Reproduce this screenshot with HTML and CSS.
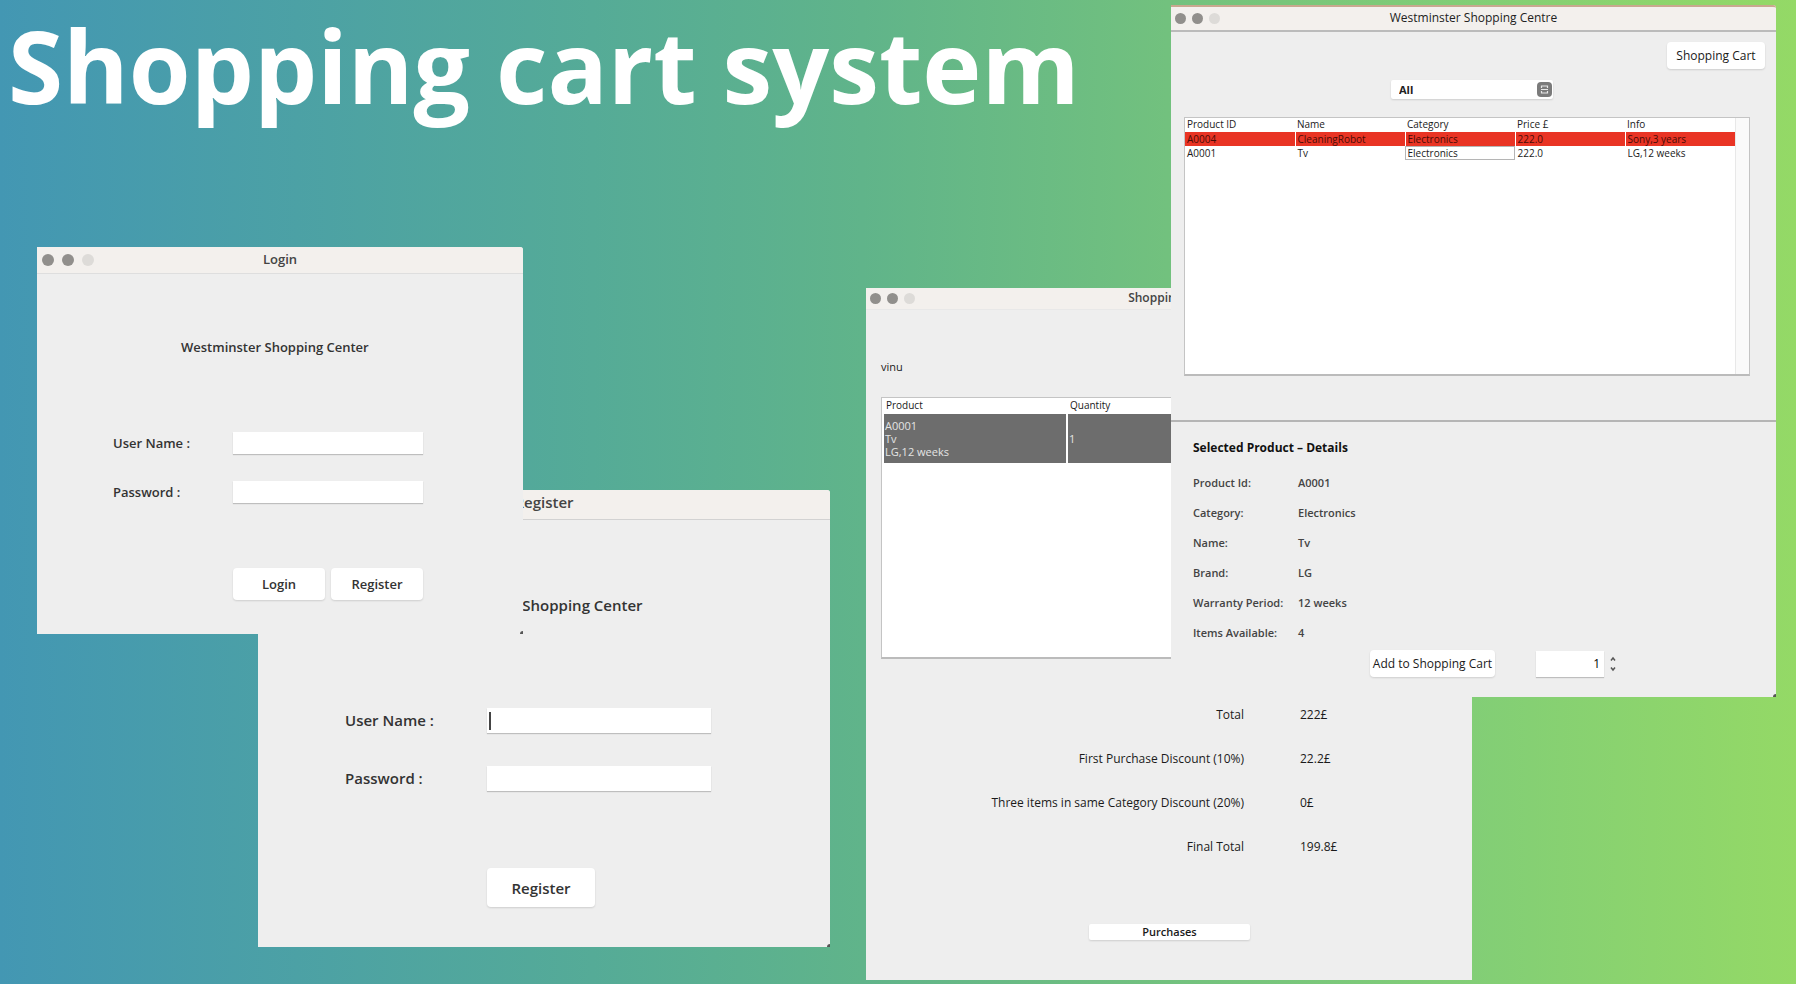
FILE: index.html
```html
<!DOCTYPE html>
<html lang="en">
<head>
<meta charset="utf-8">
<title>Shopping cart system</title>
<link rel="stylesheet" href="styles.css">
</head>
<body>
<main class="canvas">
  <h1 class="headline">Shopping cart system</h1>

  <section class="window register">
    <header class="titlebar"><h2 class="window-title">Register</h2></header>
    <form class="form">
      <p class="form-heading">Westminster Shopping Center</p>
      <label for="reg-user">User Name :</label>
      <span class="field"><input id="reg-user" type="text"><i class="caret"></i></span>
      <label for="reg-pass">Password :</label>
      <span class="field"><input id="reg-pass" type="password"></span>
      <div class="actions"><button type="button">Register</button></div>
    </form>
  </section>

  <section class="window login">
    <header class="titlebar">
      <span class="lights"><i></i><i></i><i></i></span>
      <h2 class="window-title">Login</h2>
    </header>
    <form class="form">
      <p class="form-heading">Westminster Shopping Center</p>
      <label for="log-user">User Name :</label>
      <span class="field"><input id="log-user" type="text"></span>
      <label for="log-pass">Password :</label>
      <span class="field"><input id="log-pass" type="password"></span>
      <div class="actions"><button type="button">Login</button><button type="button">Register</button></div>
    </form>
  </section>

  <section class="window cart">
    <header class="titlebar">
      <span class="lights"><i></i><i></i><i></i></span>
      <h2 class="window-title">Shopping Cart</h2>
    </header>
    <p class="user">vinu</p>
    <div class="cart-pane">
      <table class="cart-table">
        <thead><tr><th>Product</th><th>Quantity</th></tr></thead>
        <tbody><tr><td>A0001<br>Tv<br>LG,12 weeks</td><td>1</td></tr></tbody>
      </table>
    </div>
    <dl class="totals">
      <dt>Total</dt><dd>222£</dd>
      <dt>First Purchase Discount (10%)</dt><dd>22.2£</dd>
      <dt>Three items in same Category Discount (20%)</dt><dd>0£</dd>
      <dt>Final Total</dt><dd>199.8£</dd>
    </dl>
    <button class="purchase" type="button">Purchases</button>
  </section>

  <section class="window centre">
    <header class="titlebar">
      <span class="lights"><i></i><i></i><i></i></span>
      <h2 class="window-title">Westminster Shopping Centre</h2>
    </header>
    <div class="toolbar"><button type="button">Shopping Cart</button></div>
    <div class="filter">
      <select aria-label="Category"><option>All</option></select>
      <svg class="chevrons" viewBox="0 0 15 15" aria-hidden="true">
        <rect width="15" height="15" rx="4" fill="#7b7b7b"/>
        <path d="M4.500 6V4H10.500V6M4.500 9V11H10.500V9M4 7.500H11" fill="none" stroke="#e8e8e8" stroke-width="1.200"/>
      </svg>
    </div>
    <div class="product-pane">
      <table class="products">
        <thead><tr><th>Product ID</th><th>Name</th><th>Category</th><th>Price £</th><th>Info</th></tr></thead>
        <tbody>
          <tr class="low"><td>A0004</td><td>CleaningRobot</td><td>Electronics</td><td>222.0</td><td>Sony,3 years</td></tr>
          <tr><td>A0001</td><td>Tv</td><td class="focus">Electronics</td><td>222.0</td><td>LG,12 weeks</td></tr>
        </tbody>
      </table>
      <div class="track"></div>
    </div>
    <div class="details">
      <h3>Selected Product – Details</h3>
      <dl>
        <dt>Product Id:</dt><dd>A0001</dd>
        <dt>Category:</dt><dd>Electronics</dd>
        <dt>Name:</dt><dd>Tv</dd>
        <dt>Brand:</dt><dd>LG</dd>
        <dt>Warranty Period:</dt><dd>12 weeks</dd>
        <dt>Items Available:</dt><dd>4</dd>
      </dl>
      <div class="add">
        <button type="button">Add to Shopping Cart</button>
        <input type="text" inputmode="numeric" value="1" aria-label="Quantity">
        <span class="stepper">
          <button type="button" aria-label="Increase"><svg viewBox="0 0 8 6"><path d="M2 4.500L4 2L6 4.500" fill="none" stroke="#555" stroke-width="1.500"/></svg></button>
          <button type="button" aria-label="Decrease"><svg viewBox="0 0 8 6"><path d="M2 1.500L4 4L6 1.500" fill="none" stroke="#555" stroke-width="1.500"/></svg></button>
        </span>
      </div>
    </div>
  </section>
</main>
</body>
</html>
```

FILE: styles.css
```css
* { box-sizing: border-box; }
body { margin: 0; }
h1, h2, h3, p, dl, dd { margin: 0; }

.canvas {
  position: relative;
  min-height: 100vh;
  overflow: hidden;
  background: linear-gradient(90deg, #4397b3 0%, #55ab97 33%, #60b48a 48%, #72c17e 65%, #82ce76 82%, #94d966 100%);
  font-family: "Open Sans", "Noto Sans", sans-serif;
  color: #1a1a1a;
}
.headline {
  padding: 0 8px;
  font-size: 100px;
  line-height: 130px;
  font-weight: 700;
  color: #fff;
  white-space: nowrap;
}

/* Windows on the desktop */
.window { position: absolute; background: #eee; border-top-right-radius: 3px; white-space: nowrap; }
.window::after {
  content: "";
  position: absolute;
  right: 0;
  bottom: 0;
  width: 3px;
  height: 3px;
  border-top-left-radius: 3px;
  background: #555;
}
.titlebar {
  display: grid;
  grid-template-columns: 1fr auto 1fr;
  align-items: center;
  background: #f3f0ed;
  border-bottom: 1px solid #dedede;
  border-top-right-radius: 3px;
}
.window-title {
  grid-column: 2;
  padding-bottom: 2px;
  font-size: inherit;
  line-height: 18px;
  font-weight: 600;
  color: #444;
}
.lights { display: flex; gap: 6px; padding-left: 4px; }
.lights i { width: 11px; height: 11px; border-radius: 50%; background: #918f8c; }
.lights i:last-child { background: #dddbd8; }

button {
  padding: 0;
  border: 0;
  border-radius: 4px;
  background: #fff;
  box-shadow: 0 1px 2px #0002;
  font: inherit;
  color: #1a1a1a;
}
input {
  display: block;
  width: 100%;
  border: 0;
  padding: 0 4px;
  background: #fff;
  box-shadow: 0 1px 1px #0003;
  font: inherit;
}

/* Login and register forms */
.form { display: grid; align-items: end; font-weight: 600; color: #333; }
.form button { color: #333; }
.form-heading { grid-column: 1 / -1; }
.form label { grid-column: 1; }
.field { position: relative; }
.actions { grid-column: 2; display: flex; gap: 6px; }
.caret { position: absolute; left: 2px; top: 4px; bottom: 3px; width: 2px; background: #444; }

.login { left: 37px; top: 247px; width: 486px; font-size: 13px; }
.login .titlebar { height: 27px; }
.login .lights { gap: 8px; padding-left: 5px; }
.login .lights i { width: 12px; height: 12px; }
.login .form {
  grid-template-columns: 120px 190px;
  grid-template-rows: 20px 98px 49px 97px;
  padding: 62px 0 34px 76px;
}
.login .form-heading { padding-left: 68px; }
.login .field input { height: 22px; }
.login .actions button { flex: 1; height: 32px; }
.login label { line-height: 22px; }

.register { left: 258px; top: 490px; width: 572px; font-size: 15px; }
.register .titlebar { height: 30px; border-color: #d2d2d2; }
.register .window-title { padding-bottom: 5px; }
.register .form {
  grid-template-columns: 142px 224px;
  grid-template-rows: 22px 118px 58px 116px;
  padding: 73px 0 40px 87px;
}
.register .form-heading { padding-left: 81px; }
.register .field input { height: 25px; }
.register label { line-height: 25px; }
.register .actions button { width: 108px; height: 39px; }

/* Cart window */
.cart { left: 866px; top: 288px; width: 606px; padding-bottom: 40px; font-size: 11px; }
.cart::after { display: none; }
.cart .titlebar { height: 22px; border-color: #e8e8e8; font-size: 12px; }
.user { padding: 49px 15px 22px; line-height: 16px; }
.cart-pane { height: 262px; margin: 0 15px; border: 1px solid #c4c4c4; border-bottom: 2px solid #bbb; background: #fff; }
.cart-table { width: 100%; border-collapse: collapse; table-layout: fixed; line-height: 13px; font-size: 10px; }
.cart-table th { padding: 1px 3px 2px; text-align: left; font-weight: 400; }
.cart-table th:first-child { width: 184px; }
.cart-table td {
  padding: 5px 1px;
  border: 2px solid #fff;
  border-width: 0 2px;
  background: #6d6d6d;
  color: #e4e4e4;
  font-size: 11px;
}
.totals {
  display: grid;
  grid-template-columns: 378px 1fr;
  column-gap: 56px;
  row-gap: 28px;
  padding: 48px 0 69px;
  font-size: 12px;
  line-height: 16px;
}
.totals dt { text-align: right; }
.purchase {
  display: block;
  width: 161px;
  height: 16px;
  margin-left: 223px;
  border-radius: 2px;
  line-height: 16px;
  font-weight: 600;
}

/* Product window */
.centre { left: 1171px; top: 5px; width: 605px; padding-bottom: 20px; font-size: 12px; }
.centre .titlebar { height: 27px; border-top: 2px solid #c9a88f; border-bottom: 2px solid #bbb; }
.centre .window-title { font-weight: 400; color: #222; }
.toolbar { display: flex; justify-content: flex-end; padding: 10px 11px; }
.toolbar button { width: 98px; height: 27px; }
.filter { position: relative; width: 162px; margin: 1px 0 18px 220px; }
.filter select {
  display: block;
  width: 100%;
  height: 19px;
  padding: 0 8px;
  border: 0;
  border-radius: 2px;
  appearance: none;
  background: #fff;
  box-shadow: 0 1px 2px #0002;
  font: inherit;
  font-size: 11px;
  font-weight: 700;
  color: #222;
}
.chevrons { position: absolute; right: 1px; top: 2px; width: 15px; height: 15px; }
.product-pane {
  display: grid;
  grid-template-columns: 1fr 14px;
  height: 259px;
  margin: 0 26px 0 13px;
  border: 1px solid #c4c4c4;
  border-bottom: 2px solid #bbb;
  background: #fff;
}
.products { width: 100%; align-self: start; border-collapse: collapse; table-layout: fixed; font-size: 10px; line-height: 13px; }
.products th { padding: 0 2px 1px; text-align: left; font-weight: 400; }
.products td { padding: 0 2px; border-left: 1px solid #fff; height: 14px; }
.products td:first-child { border-left: 0; }
.low td { background: #e93424; color: #4a0c06; }
.products .focus { outline: 1px solid #b5b5b5; outline-offset: -1px; }
.track { border-left: 1px solid #e8e8e8; background: #fafafa; }
.details { margin-top: 44px; padding: 17px 22px 0; border-top: 2px solid #b5b5b5; font-size: 11px; }
.details h3 { font-size: 12px; line-height: 18px; font-weight: 700; color: #111; }
.details dl {
  display: grid;
  grid-template-columns: 105px 1fr;
  row-gap: 12px;
  padding: 17px 0 8px;
  line-height: 18px;
  font-weight: 600;
  color: #444;
}
.add { display: flex; align-items: center; padding-left: 177px; font-size: 12px; }
.add > button { width: 125px; height: 27px; }
.add input { width: 68px; height: 26px; margin-left: 41px; text-align: right; }
.stepper { display: flex; flex-direction: column; gap: 4px; margin-left: 5px; }
.stepper button { display: flex; width: 8px; height: 6px; background: none; box-shadow: none; }
```
